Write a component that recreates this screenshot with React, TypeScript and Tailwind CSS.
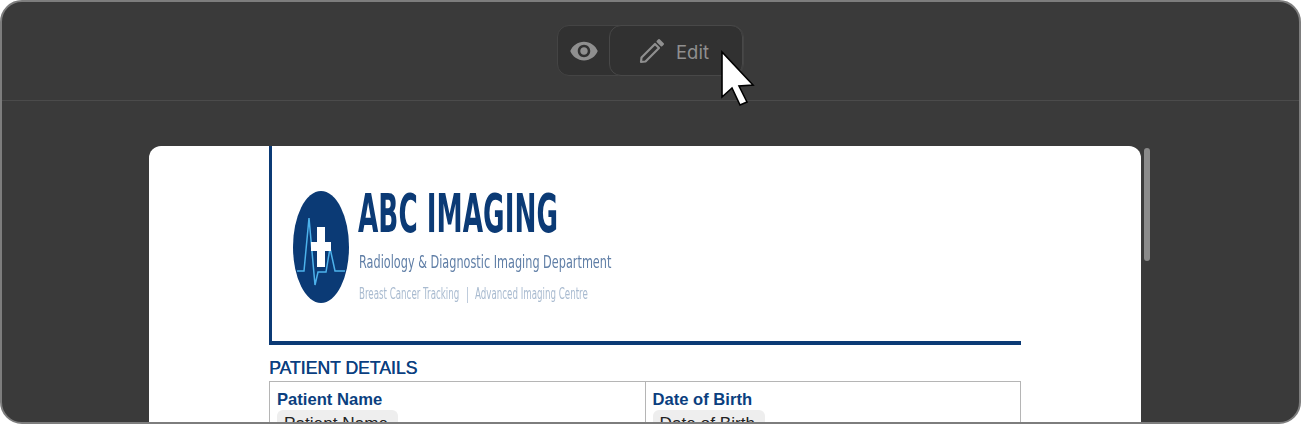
import { MdVisibility } from "react-icons/md"

const sans = "font-['Liberation_Sans',Arial,sans-serif]"
const logoFont = "'DejaVu Sans', sans-serif"

function Logo() {
  return (
    <svg width="330" height="130" viewBox="0 0 330 130" className="blur-[0.5px]">
      <ellipse cx="28" cy="62" rx="28" ry="56" fill="#0b3a75" />
      <path
        d="M4 86 H11 L16 33 L22 100 L25 87 L33 87 L37 63 L42 86 H52"
        fill="none"
        stroke="#4db2ec"
        strokeWidth="1.5"
      />
      <rect x="24" y="42" width="8" height="40" fill="#fff" />
      <rect x="18" y="57" width="20" height="9" fill="#fff" />
      <text
        transform="translate(65 47) scale(0.496 1)"
        fontFamily={logoFont}
        fontWeight="700"
        fontSize="53"
        fill="#0b3a75"
      >
        ABC IMAGING
      </text>
      <text transform="translate(66 83) scale(0.627 1)" fontFamily={logoFont} fontSize="18" fill="#5f7ea6">
        Radiology &amp; Diagnostic Imaging Department
      </text>
      <text transform="translate(66 114) scale(0.58 1)" fontFamily={logoFont} fontSize="15" fill="#a9bbd0">
        Breast Cancer Tracking
      </text>
      <text transform="translate(173 114) scale(0.58 1)" fontFamily={logoFont} fontSize="15" fill="#a9bbd0">
        |
      </text>
      <text transform="translate(182 114) scale(0.58 1)" fontFamily={logoFont} fontSize="15" fill="#a9bbd0">
        Advanced Imaging Centre
      </text>
    </svg>
  )
}

function PencilIcon() {
  return (
    <svg width="30" height="30" viewBox="0 0 30 30" fill="none" stroke="currentColor" strokeLinejoin="round">
      <path d="M4 26 L4.5 21.5 L18 8 L22 12 L8.5 25.5 Z" strokeWidth="2.2" />
      <path d="M20.5 5.5 L22 4 L26 8 L24.5 9.5 Z" strokeWidth="2" fill="currentColor" />
    </svg>
  )
}

function Field({ label }: { label: string }) {
  return (
    <div className="flex-1 border-r border-[#b5b5b5] last:border-r-0 pl-[7px] pt-[8px]">
      <div className="text-[16.6px] leading-[19px] font-bold text-[#0b3f80]">{label}</div>
      <div className="mt-[1px] inline-block rounded-[6px] bg-[#eeeeee] pl-[7px] pr-[10px] pt-[3px] pb-[2px] text-[17.2px] leading-[20px] text-[#222]">
        {label}
      </div>
    </div>
  )
}

export default function App() {
  return (
    <div className={`w-[1301px] h-[424px] bg-white overflow-hidden ${sans}`}>
      <div className="relative h-full rounded-[22px] border-2 border-[#7d7d7d] bg-[#3a3a3a] overflow-hidden">
        <div className="h-[99px] border-b border-[#4b4b4b] flex justify-center pt-[23px]">
          <div className="flex h-[51px] w-[187px] rounded-[12px] border border-[#444444] bg-[#313131]">
            <div className="w-[51px] flex items-center justify-center text-[#8f8f8f] pt-[1px]">
              <MdVisibility size={30} />
            </div>
            <div className="flex-1 flex items-center gap-[9px] pl-[27px] pt-[1px] rounded-[12px] border border-[#484848] bg-[#313131] text-[#8f8f8f] -my-px">
              <PencilIcon />
              <span className="text-[18.5px] leading-[22px] pt-[2px] font-['Inter',sans-serif]">Edit</span>
            </div>
          </div>
        </div>

        <div className="pt-[45px] pl-[147px]">
          <div className="w-[992px] h-[300px] rounded-t-[12px] bg-white overflow-hidden pl-[120px]">
            <div className="w-[752px] h-[199px] border-l-[3px] border-b-[4px] border-[#0b3a75] pl-[21px] pt-[39px]">
              <Logo />
            </div>
            <div className="w-[752px]">
              <h2 className="mt-[13px] text-[17.6px] leading-[20px] text-[#0b3f80] [text-shadow:0.4px_0_0_#0b3f80]">
                PATIENT DETAILS
              </h2>
              <div className="mt-[3px] flex h-[80px] border border-[#b5b5b5]">
                <Field label="Patient Name" />
                <Field label="Date of Birth" />
              </div>
            </div>
          </div>
        </div>

        <div className="absolute left-[1142px] top-[146px] h-[113px] w-[6px] rounded-full bg-[#8a8a8a]" />

        <svg className="absolute left-[718px] top-[48px]" width="38" height="58" viewBox="0 0 38 58">
          <path
            d="M2 2 V47 L12 38 L20 55 L27 52 L19 36 L33 35 Z"
            fill="#fff"
            stroke="#000"
            strokeWidth="1.6"
            strokeLinejoin="miter"
          />
        </svg>
      </div>
    </div>
  )
}
